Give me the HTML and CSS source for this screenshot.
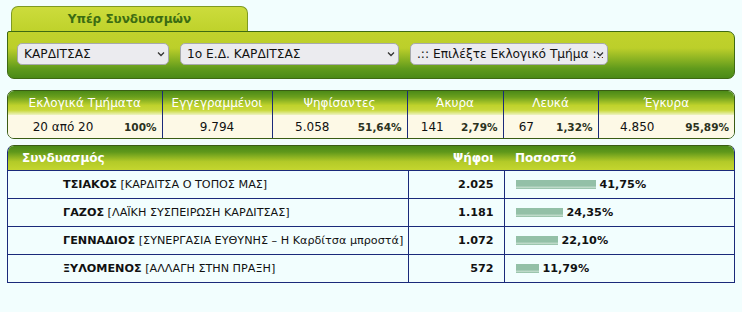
FILE: index.html
```html
<!DOCTYPE html>
<html lang="el">
<head>
    <meta charset="UTF-8">
    <title>Αποτελέσματα Εκλογών</title>
    <link rel="stylesheet" href="styles.css">
</head>
<body>
    <div class="page">
        <!-- Tab + filters -->
        <div class="tab">Υπέρ Συνδυασμών</div>
        <div class="filters">
            <span class="pick pick-nomos">
                <select><option>ΚΑΡΔΙΤΣΑΣ</option></select>
                <svg class="chev" width="8" height="6" viewBox="0 0 8 6"><path d="M1 1.5 L4 4.5 L7 1.5" fill="none" stroke="#333" stroke-width="1.3"/></svg>
            </span>
            <span class="pick pick-ed">
                <select><option>1ο Ε.Δ. ΚΑΡΔΙΤΣΑΣ</option></select>
                <svg class="chev" width="8" height="6" viewBox="0 0 8 6"><path d="M1 1.5 L4 4.5 L7 1.5" fill="none" stroke="#333" stroke-width="1.3"/></svg>
            </span>
            <span class="pick pick-tmima">
                <select><option>.:: Επιλέξτε Εκλογικό Τμήμα ::.</option></select>
                <svg class="chev" width="8" height="6" viewBox="0 0 8 6"><path d="M1 1.5 L4 4.5 L7 1.5" fill="none" stroke="#333" stroke-width="1.3"/></svg>
            </span>
        </div>

        <!-- Summary -->
        <div class="box stats">
            <table>
                <colgroup>
                    <col style="width:110px"><col style="width:44px">
                    <col style="width:110px">
                    <col style="width:80px"><col style="width:55px">
                    <col style="width:50px"><col style="width:46px">
                    <col style="width:46px"><col style="width:49px">
                    <col style="width:78px"><col>
                </colgroup>
                <thead>
                    <tr>
                        <th colspan="2">Εκλογικά Τμήματα</th>
                        <th>Εγγεγραμμένοι</th>
                        <th colspan="2">Ψηφίσαντες</th>
                        <th colspan="2">Άκυρα</th>
                        <th colspan="2">Λευκά</th>
                        <th colspan="2">Έγκυρα</th>
                    </tr>
                </thead>
                <tbody>
                    <tr>
                        <td class="num first">20 από 20</td><td class="pct">100%</td>
                        <td class="num first">9.794</td>
                        <td class="num first">5.058</td><td class="pct">51,64%</td>
                        <td class="num first">141</td><td class="pct">2,79%</td>
                        <td class="num first">67</td><td class="pct">1,32%</td>
                        <td class="num first">4.850</td><td class="pct">95,89%</td>
                    </tr>
                </tbody>
            </table>
        </div>

        <!-- Results -->
        <div class="box results">
            <table>
                <colgroup>
                    <col style="width:400px"><col style="width:96px"><col>
                </colgroup>
                <thead>
                    <tr>
                        <th class="name">Συνδυασμός</th>
                        <th class="votes">Ψήφοι</th>
                        <th class="share">Ποσοστό</th>
                    </tr>
                </thead>
                <tbody>
                    <tr>
                        <td class="name"><b>ΤΣΙΑΚΟΣ</b> [ΚΑΡΔΙΤΣΑ Ο ΤΟΠΟΣ ΜΑΣ]</td>
                        <td class="votes">2.025</td>
                        <td class="share"><span class="bar" style="width:80px"></span>41,75%</td>
                    </tr>
                    <tr>
                        <td class="name"><b>ΓΑΖΟΣ</b> [ΛΑΪΚΗ ΣΥΣΠΕΙΡΩΣΗ ΚΑΡΔΙΤΣΑΣ]</td>
                        <td class="votes">1.181</td>
                        <td class="share"><span class="bar" style="width:47px"></span>24,35%</td>
                    </tr>
                    <tr>
                        <td class="name"><b>ΓΕΝΝΑΔΙΟΣ</b> [ΣΥΝΕΡΓΑΣΙΑ ΕΥΘΥΝΗΣ – Η Καρδίτσα μπροστά]</td>
                        <td class="votes">1.072</td>
                        <td class="share"><span class="bar" style="width:42px"></span>22,10%</td>
                    </tr>
                    <tr>
                        <td class="name"><b>ΞΥΛΟΜΕΝΟΣ</b> [ΑΛΛΑΓΗ ΣΤΗΝ ΠΡΑΞΗ]</td>
                        <td class="votes">572</td>
                        <td class="share"><span class="bar" style="width:23px"></span>11,79%</td>
                    </tr>
                </tbody>
            </table>
        </div>
    </div>
</body>
</html>
```
FILE: styles.css
```css
/* General */
body {
    margin: 0;
    background: #f2fefe;
    font-family: "DejaVu Sans", Verdana, sans-serif;
    font-size: 11px;
    color: #111;
}

.page {
    width: 728px;
    padding: 6px 0 0 7px;
}

/* Tab */
.tab {
    width: 237px;
    height: 25px;
    margin-left: 4px;
    box-sizing: border-box;
    border: 1px solid #7e9a22;
    border-bottom: none;
    border-radius: 7px 7px 0 0;
    background: linear-gradient(#ccdc3c, #bfd22b);
    color: #3c6c12;
    font-weight: bold;
    font-size: 12px;
    text-align: center;
    padding-top: 5px;
}

/* Filter bar */
.filters {
    height: 48px;
    box-sizing: border-box;
    border: 1px solid #3e6a12;
    border-radius: 2px 7px 7px 7px;
    background: linear-gradient(#c1d22c 0%, #bccf2a 35%, #5f9a1c 80%, #4b8a17 100%);
    display: flex;
    align-items: center;
    gap: 11px;
    padding: 0 0 2px 9px;
}

.pick {
    position: relative;
    display: block;
    height: 22px;
}

.pick select {
    appearance: none;
    -webkit-appearance: none;
    height: 22px;
    box-sizing: border-box;
    border: 1px solid #a7a9ad;
    border-radius: 5px;
    background: #ebebef;
    font-family: "DejaVu Sans", Verdana, sans-serif;
    font-size: 12.2px;
    color: #111;
    padding: 0 4px 0 6px;
    margin: 0;
}

.pick-nomos select { width: 152px; }
.pick-ed select { width: 219px; }
.pick-tmima select { width: 198px; }

.chev {
    position: absolute;
    right: 4px;
    top: 8px;
    pointer-events: none;
    background: #ebebef;
}

/* Boxes */
.box {
    border: 1px solid #3a5c14;
    border-radius: 7px;
    overflow: hidden;
}

.box table {
    width: 100%;
    border-collapse: collapse;
    table-layout: fixed;
}

.box th {
    color: #fff;
    font-weight: normal;
    font-size: 12px;
    height: 24px;
    padding: 0;
}

/* Summary */
.stats {
    margin-top: 11px;
    height: 47px;
}

.stats th {
    background: linear-gradient(#4b8a17 0%, #6a9f1d 25%, #bfd22c 60%, #c8d839 80%, #eef3c3 100%);
    border-left: 1px solid #1b2a7a;
}

.stats th:first-child { border-left: none; }

.stats td {
    background: #fdf9e6;
    height: 23px;
    padding: 0;
    font-size: 12px;
    text-align: center;
}

.stats td.first { border-left: 1px solid #1b2a7a; }
.stats td.first:first-child { border-left: none; }

.stats td.pct {
    font-size: 10.5px;
    font-weight: bold;
    color: #2b3220;
    text-align: right;
    padding-right: 5px;
}

/* Results */
.results {
    margin-top: 6px;
    border-color: #3a5c14 #1b2a7a #1b2a7a;
    border-radius: 7px 7px 0 0;
}

.results th {
    background: linear-gradient(#4b8a17 0%, #5f981b 25%, #b3ca28 65%, #c4d62f 100%);
    font-weight: bold;
    height: 24px;
}

.results th.name { text-align: left; padding-left: 14px; }
.results th.votes { text-align: right; padding-right: 10px; }
.results th.share { text-align: left; padding-left: 11px; }

.results td {
    height: 27px;
    padding: 0;
    border-top: 1px solid #1b2a7a;
    font-size: 11.2px;
}

.results td + td { border-left: 1px solid #1b2a7a; }

.results td.name { padding-left: 55px; }
.results td.votes { text-align: right; padding-right: 10px; font-weight: bold; }
.results td.share { padding-left: 11px; font-weight: bold; }

.bar {
    display: inline-block;
    height: 9px;
    margin-right: 4px;
    vertical-align: -1px;
    background: linear-gradient(#93c0a7 0%, #93c0a7 70%, #d9ebe0 78%, #a6cbb5 88%, #93c0a7 100%);
}
```
